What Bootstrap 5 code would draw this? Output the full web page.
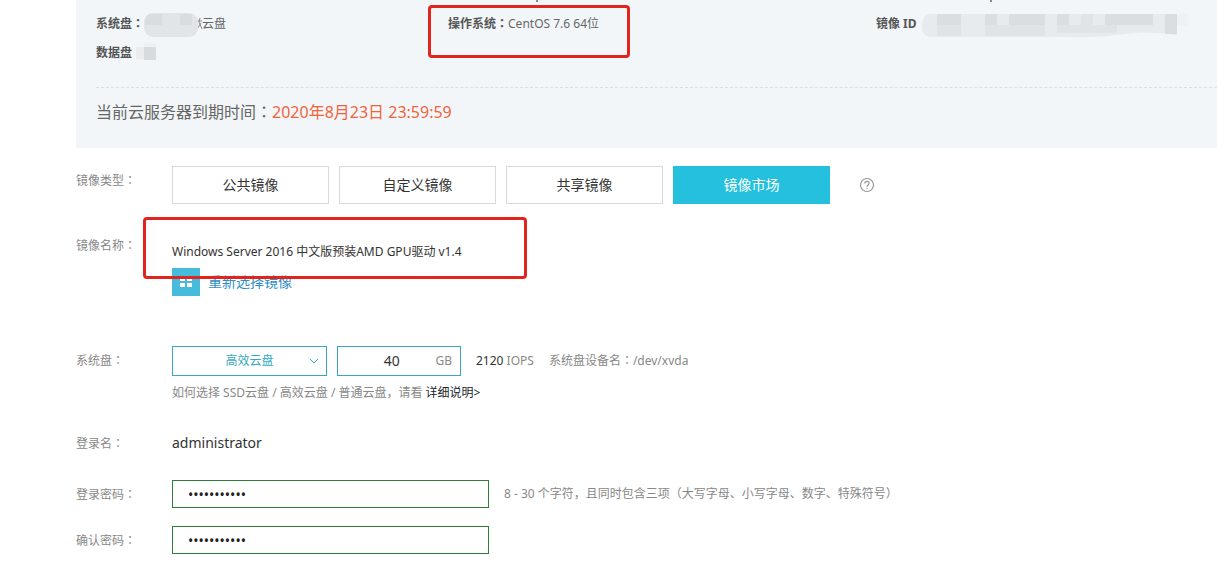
<!DOCTYPE html>
<html lang="zh-CN">
<head>
<meta charset="utf-8">
<meta name="viewport" content="width=device-width, initial-scale=1">
<title>更换系统盘</title>
<link href="https://cdn.jsdelivr.net/npm/bootstrap@5.3.0/dist/css/bootstrap.min.css" rel="stylesheet">
<style>
body{font-family:"Noto Sans","Noto Sans CJK SC",sans-serif;font-size:12px;line-height:18px;color:#333;background:#fff}
.page{padding-left:76px;overflow-x:hidden}
.colon{font-family:"Noto Sans CJK TC",sans-serif;font-style:normal;line-height:1}
.info{background:#f2f6f9;padding:0 0 24px 20px;color:#666}
.info-grid{display:grid;grid-template-columns:352fr 428fr 341fr;row-gap:11px;padding-bottom:25px}
.info-grid strong{color:#555;font-weight:700}
.info-grid svg{overflow:visible}
.clip-row{display:grid;grid-template-columns:352fr 428fr 341fr;height:2px;margin-bottom:13px}
.tick{display:block;width:2px;height:2px;background:#8a8d90}
.tick-a{margin-left:88px}
.tick-b{margin-left:114px}
.masked{padding-left:58px}
.expire{border-top:1px dashed #d9dfe3;padding-top:12px;font-size:16px;line-height:24px}
.orange{color:#f0643c}
.red-frame{position:absolute;border:3px solid #e0251f;border-radius:4px;pointer-events:none;z-index:2}
.frame-os{left:-20px;top:-10px;width:202px;height:53px}
.frame-image{left:-29px;top:-14px;width:384px;height:62px}
.field{display:grid;grid-template-columns:96px 1fr}
.field-name{padding-top:6px;color:#888}
.kind{width:157px;height:38px;border:1px solid #d9d9d9;border-radius:0;background:#fff;color:#333;font-size:14px;line-height:18px;padding:0}
.kind.on{background:#24c0de;border-color:#24c0de;color:#fff}
.kinds{gap:10px}
.help{margin-left:29px;color:#999;line-height:0}
.image-name{padding-top:12px}
.pick{width:fit-content;height:28px;margin-top:7px;color:#2d8fc5;font-size:14px}
.pick-icon{width:28px;height:28px;background:#46bcdc}
.sel{width:155px;height:30px;border:1px solid #35a9c1;border-radius:0;background:#fff;color:#35a9c1;appearance:none;text-align-last:center;padding:0;outline:0}
.chev{position:absolute;right:8px;top:11px;pointer-events:none}
.size-box{width:124px;height:30px;margin-left:10px;border:1px solid #35a9c1;padding-right:8px}
.size-box input{width:107px;border:0;text-align:center;font-size:14px;color:#333;padding:0 0 0 10px;outline:0;background:transparent;min-width:0}
.gray{color:#888}
.note{margin-left:15px}
.login{padding-top:5px;font-size:14px}
.pw{width:317px;height:28px;border:1px solid #2f7f3a;border-radius:0;padding:0 15px;font-family:"Noto Sans",sans-serif;font-size:14px;color:#222;outline:0}
.gap-1x{margin-top:18px}
.gap-2x{margin-top:27px}
.gap-3x{margin-top:50px}
</style>
</head>
<body>
<main class="page">
  <section class="info">
    <div class="clip-row" aria-hidden="true"><span></span><span class="tick tick-a"></span><span class="tick tick-b"></span></div>
    <div class="info-grid">
      <div class="d-flex"><strong>系统盘<i class="colon" lang="zh-Hant">：</i></strong>
        <div class="position-relative masked"><span>云盘</span>
          <svg class="position-absolute start-0 top-0" width="60" height="18" aria-hidden="true"><path d="M53 6h5M56 3l-1 4 3 7M57 8l-4 6" fill="none" stroke="#888"/><rect x="0" y="-2" width="54" height="24" rx="9" fill="#e2e5e7"/><path d="M6 -1h12v11H1q0-10 5-11zM36 -1h12v11H36z" fill="#dadddf"/></svg>
        </div></div>
      <div class="position-relative"><strong>操作系统<i class="colon" lang="zh-Hant">：</i></strong>CentOS 7.6 64位<span class="red-frame frame-os"></span></div>
      <div class="d-flex"><strong>镜像 ID</strong>
        <svg class="ms-1" width="290" height="18" viewBox="0 1 290 18" aria-hidden="true"><path d="M9 0H256V21Q225 16 196 21Q170 24 150 23H9Q0 22 1 11Q2 1 9 0z" fill="#e7ebed"/><g fill="#dbdee0"><path d="M16 0h24v11H16zM64 0h12v11H64zM88 0h36v11H88zM136 0h12v11h-12zM184 0h48v11h-48zM244 0h12v20h-12z"/></g><g fill="#e0e4e6"><path d="M16 11h24v11H16zM64 11h60v11H64zM160 0h12v11h-12zM136 11h60v8h-60z"/></g><path d="M256 0h12v12h-12z" fill="#eef2f5"/></svg></div>
      <div class="d-flex"><strong>数据盘</strong>
        <svg width="70" height="18" aria-hidden="true"><path d="M4 3h8v12H4z" fill="#e9edef"/><path d="M12 -1h12v5H12z" fill="#edf1f3"/><path d="M12 3h12v13H12z" fill="#d7dbdd"/></svg></div>
    </div>
    <div class="expire">当前云服务器到期时间<i class="colon" lang="zh-Hant">：</i><span class="orange">2020年8月23日 23:59:59</span></div>
  </section>

  <form>
    <div class="field gap-1x">
      <div class="field-name">镜像类型<i class="colon" lang="zh-Hant">：</i></div>
      <div class="d-flex align-items-center">
        <div class="d-flex kinds">
          <button type="button" class="btn kind">公共镜像</button>
          <button type="button" class="btn kind">自定义镜像</button>
          <button type="button" class="btn kind">共享镜像</button>
          <button type="button" class="btn kind on">镜像市场</button>
        </div>
        <a href="#" class="help" aria-label="帮助"><svg width="16" height="16" viewBox="0 0 16 16" fill="none" stroke="currentColor" stroke-width="1.2"><circle cx="8" cy="8" r="6.5"/><path d="M5.8 6.4C5.8 3.6 10.2 3.6 10.2 6.3C10.2 8 8 8 8 9.8M8 10.8V12"/></svg></a>
      </div>
    </div>

    <div class="field gap-2x">
      <div class="field-name">镜像名称<i class="colon" lang="zh-Hant">：</i></div>
      <div class="position-relative">
        <div class="image-name">Windows Server 2016 中文版预装AMD GPU驱动 v1.4</div>
        <a href="#" class="pick d-flex align-items-center gap-2 text-decoration-none">
          <span class="pick-icon d-flex align-items-center justify-content-center"><svg width="12" height="10" fill="#fff"><path d="M0 0h5v4H0zM7 0h5v4H7zM0 6h5v4H0zM7 6h5v4H7z"/></svg></span>重新选择镜像</a>
        <span class="red-frame frame-image"></span>
      </div>
    </div>

    <div class="field gap-3x">
      <label class="field-name" for="disk">系统盘<i class="colon" lang="zh-Hant">：</i></label>
      <div>
        <div class="d-flex align-items-center">
          <div class="position-relative">
            <select id="disk" class="sel"><option>高效云盘</option></select>
            <svg class="chev" width="10" height="8" fill="none" stroke="#35a9c1"><path d="M1 2l4 4 4-4"/></svg>
          </div>
          <div class="size-box d-flex align-items-center">
            <input id="size" type="text" value="40" aria-label="容量"><label for="size" class="gray">GB</label>
          </div>
          <span class="note">2120 <span class="gray">IOPS</span></span>
          <span class="gray note">系统盘设备名<i class="colon" lang="zh-Hant">：</i>/dev/xvda</span>
        </div>
        <div class="gray mt-2">如何选择 SSD云盘 / 高效云盘 / 普通云盘，请看 <a href="#" class="text-decoration-none text-reset"><span class="text-dark">详细说明&gt;</span></a></div>
      </div>
    </div>

    <div class="field gap-2x">
      <div class="field-name">登录名<i class="colon" lang="zh-Hant">：</i></div>
      <div class="login">administrator</div>
    </div>

    <div class="field gap-2x">
      <label class="field-name" for="pw1">登录密码<i class="colon" lang="zh-Hant">：</i></label>
      <div class="d-flex align-items-center">
        <input id="pw1" type="password" class="pw" value="abcdefghijk">
        <span class="gray note">8 - 30 个字符，且同时包含三项（大写字母、小写字母、数字、特殊符号）</span>
      </div>
    </div>

    <div class="field gap-1x">
      <label class="field-name" for="pw2">确认密码<i class="colon" lang="zh-Hant">：</i></label>
      <div><input id="pw2" type="password" class="pw d-block" value="abcdefghijk"></div>
    </div>
  </form>
</main>
<script src="https://cdn.jsdelivr.net/npm/bootstrap@5.3.0/dist/js/bootstrap.bundle.min.js"></script>
</body>
</html>
